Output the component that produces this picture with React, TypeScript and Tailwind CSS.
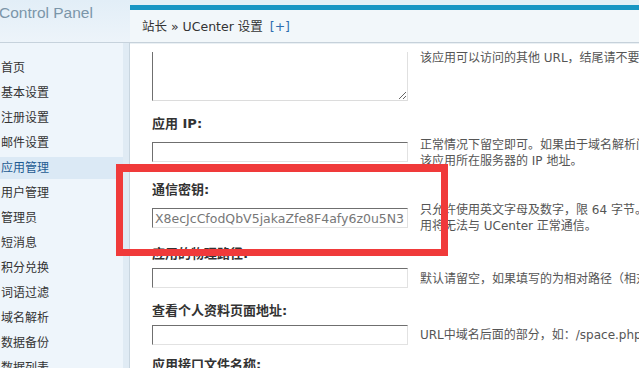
import React from "react";

const menu = [
  "首页",
  "基本设置",
  "注册设置",
  "邮件设置",
  "应用管理",
  "用户管理",
  "管理员",
  "短消息",
  "积分兑换",
  "词语过滤",
  "域名解析",
  "数据备份",
  "数据列表",
];

const inputCls =
  "block w-[256px] h-[20px] shrink-0 border border-t-[#6f6f6f] border-l-[#6f6f6f] border-r-[#e2e2e2] border-b-[#e2e2e2] bg-white px-[2px] text-[12.5px] leading-[16px] text-[#777] outline-none font-['DejaVu_Sans','Noto_Sans_CJK_SC',sans-serif]";

const descCls =
  "ml-[12px] whitespace-nowrap text-[12px] leading-[16px] text-[#555]";

const labelCls =
  "h-[16px] leading-[16px] text-[13px] font-bold text-[#333] whitespace-nowrap";

export default function App() {
  return (
    <div className="relative flex w-[639px] h-[368px] overflow-hidden bg-white font-['DejaVu_Sans','Noto_Sans_CJK_SC',sans-serif]">
      {/* Left frame */}
      <aside className="flex w-[130px] shrink-0 flex-col">
        <div className="h-[43px] shrink-0 border-b border-[#c6d2dc] bg-gradient-to-b from-[#e2eef7] to-[#edf4fa] pt-[4px]">
          <div className="-ml-[1px] text-[15.5px] leading-[18px] text-[#7b96a9] font-['Liberation_Sans',sans-serif]">
            Control Panel
          </div>
        </div>
        <div className="flex flex-1">
          <ul className="flex w-[123px] flex-col gap-[3px] bg-[#eef5fb] pt-[14px]">
            {menu.map((m) => (
              <li
                key={m}
                className={
                  m === "应用管理"
                    ? "h-[22px] shrink-0 pl-[1px] text-[12px] leading-[22px] bg-[#dbe9f5] text-[#1e5b92]"
                    : "h-[22px] shrink-0 pl-[1px] text-[12px] leading-[22px] text-[#333]"
                }
              >
                {m}
              </li>
            ))}
          </ul>
          <div className="w-[6px] bg-[#e0ebf4]" />
          <div className="w-[1px] bg-[#c8d5df]" />
        </div>
      </aside>

      {/* Main frame */}
      <main className="flex min-w-0 flex-1 flex-col">
        <div className="h-[5px] shrink-0 bg-[#e3f1f6]" />
        <div className="h-[5px] shrink-0 bg-[#1797c3]" />
        <div className="h-[32px] shrink-0 bg-[#f2f7fa] pl-[12px] pt-[1px] text-[12.5px] leading-[32px] text-[#333] whitespace-nowrap">
          站长 » UCenter 设置 <span className="ml-[3px] text-[#2d6db0]">[+]</span>
        </div>
        <div className="h-[1px] shrink-0 bg-[#c6d1da]" />
        <div className="h-[1px] shrink-0 bg-[#eaf0f4]" />

        <div className="flex flex-col pl-[22px] pt-[8px]">
          {/* textarea row */}
          <div className="flex h-[49px] items-start">
            <div className="h-[49px] w-[256px] shrink-0 overflow-hidden">
              <textarea
                readOnly
                className="-mt-[31px] block h-[80px] w-[256px] resize border border-t-[#6f6f6f] border-l-[#6f6f6f] border-r-[#e0e0e0] border-b-[#dcdcdc] bg-white outline-none"
              />
            </div>
            <div className={descCls + " -mt-[2px]"}>
              该应用可以访问的其他 URL，结尾请不要加 “/” ，每行一个，只有在非常必要时才需要设置
            </div>
          </div>

          <div className={labelCls + " mt-[15px]"}>应用 IP:</div>
          <div className="mt-[4px] flex h-[32px] items-center">
            <input readOnly className={inputCls} value="" />
            <div className={descCls + " mt-[2px]"}>
              <div>正常情况下留空即可。如果由于域名解析问题导致 UCenter 与该应用通信失败，请尝试设置为</div>
              <div>该应用所在服务器的 IP 地址。</div>
            </div>
          </div>

          <div className={labelCls + " mt-[14px]"}>通信密钥:</div>
          <div className="mt-[4px] flex h-[32px] items-center">
            <input
              readOnly
              className={inputCls + " bg-[#fbfbfb]"}
              value="X8ecJcCfodQbV5jakaZfe8F4afy6z0u5N3"
            />
            <div className={descCls}>
              <div>只允许使用英文字母及数字，限 64 字节。应用端的通信密钥必须与此设置保持一致，否则该应</div>
              <div>用将无法与 UCenter 正常通信。</div>
            </div>
          </div>

          <div className={labelCls + " mt-[12px]"}>应用的物理路径:</div>
          <div className="mt-[6px] flex h-[20px] items-center">
            <input readOnly className={inputCls} value="" />
            <div className={descCls + " mt-[2px]"}>
              默认请留空，如果填写的为相对路径（相对于 UC 的物理路径），程序会自动转换为绝对路径
            </div>
          </div>

          <div className={labelCls + " mt-[15px]"}>查看个人资料页面地址:</div>
          <div className="mt-[6px] flex h-[20px] items-center">
            <input readOnly className={inputCls} value="" />
            <div className={descCls}>URL中域名后面的部分，如：/space.php?uid=%s</div>
          </div>

          <div className={labelCls + " mt-[12px]"}>应用接口文件名称:</div>
        </div>
      </main>

      {/* Red highlight box */}
      <div className="pointer-events-none absolute left-[116px] top-[164px] h-[92px] w-[332px] border-[7px] border-t-[8px] border-[#f03a3a]" />
    </div>
  );
}
